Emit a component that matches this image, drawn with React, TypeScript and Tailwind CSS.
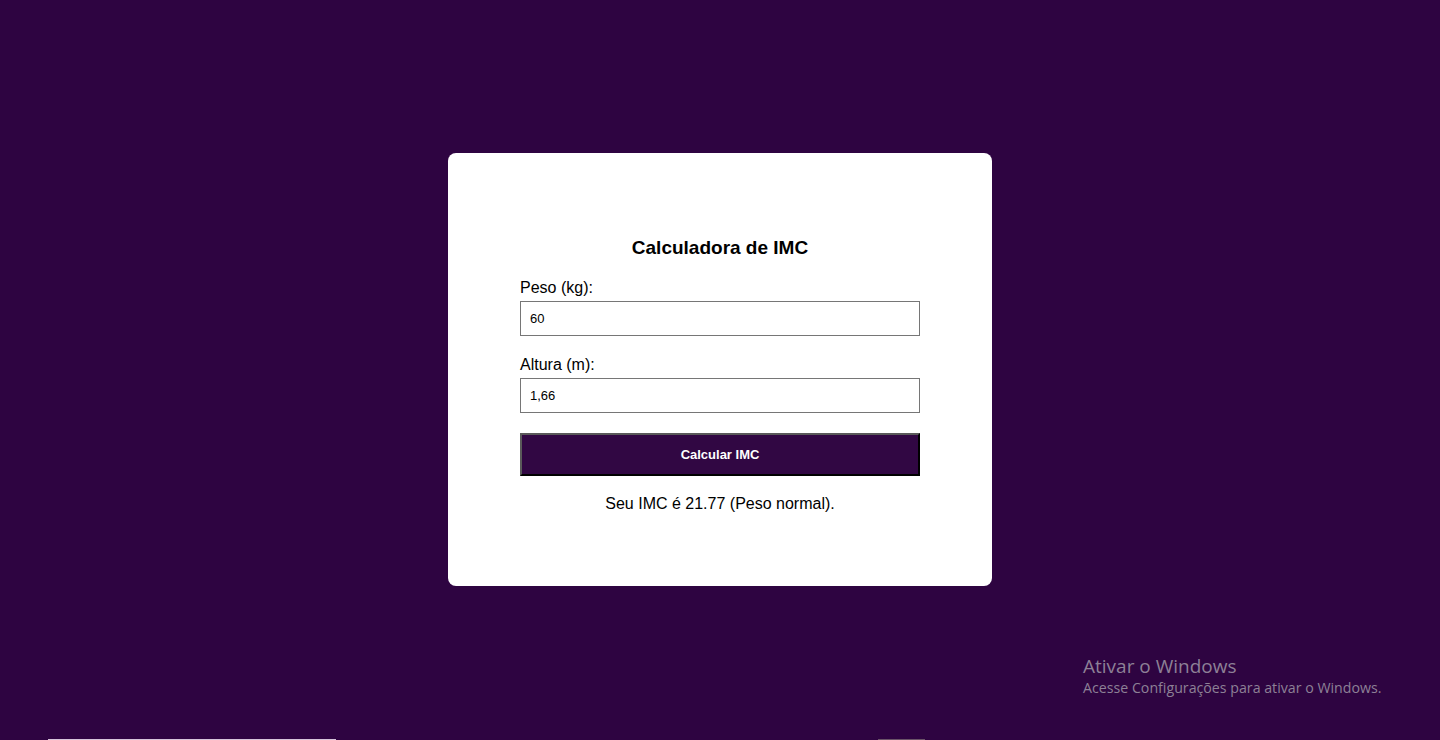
import { useState } from "react";

function classify(imc: number) {
  if (imc < 18.5) return "Abaixo do peso";
  if (imc < 25) return "Peso normal";
  if (imc < 30) return "Sobrepeso";
  return "Obesidade";
}

export default function App() {
  const [peso, setPeso] = useState("60");
  const [altura, setAltura] = useState("1,66");
  const [resultado, setResultado] = useState("Seu IMC é 21.77 (Peso normal).");

  function calcular() {
    const p = parseFloat(peso.replace(",", "."));
    const a = parseFloat(altura.replace(",", "."));
    if (!p || !a) {
      setResultado("Preencha os campos corretamente.");
      return;
    }
    const imc = p / (a * a);
    setResultado(`Seu IMC é ${imc.toFixed(2)} (${classify(imc)}).`);
  }

  return (
    <div className="relative h-[740px] w-full overflow-hidden bg-[#2e0441] font-['Liberation_Sans',Arial,sans-serif]">
      <div className="flex h-full items-start justify-center pt-[153px]">
        <div className="flex h-[433px] w-[544px] flex-col rounded-lg bg-white px-[72px] pt-[84px]">
          <h2 className="text-center text-[19px] leading-[22px] font-bold text-black">
            Calculadora de IMC
          </h2>

          <label className="mt-[20px] text-[16px] leading-[18px] text-black">Peso (kg):</label>
          <input
            value={peso}
            onChange={(e) => setPeso(e.target.value)}
            className="mt-1 h-[35px] w-full border border-[#767676] px-[9px] text-[13px] text-black outline-none"
          />

          <label className="mt-5 text-[16px] leading-[18px] text-black">Altura (m):</label>
          <input
            value={altura}
            onChange={(e) => setAltura(e.target.value)}
            className="mt-1 h-[35px] w-full border border-[#767676] px-[9px] text-[13px] text-black outline-none"
          />

          <button
            onClick={calcular}
            className="mt-5 h-[43px] w-full border-2 border-t-[#5a5a5a] border-l-[#5a5a5a] border-r-black border-b-black bg-[#310743] text-[13px] font-bold text-white"
          >
            Calcular IMC
          </button>

          <p className="mt-[19px] text-center text-[16px] leading-[18px] text-black">{resultado}</p>
        </div>
      </div>

      <div className="absolute top-[654px] left-[1083px] font-['Open_Sans','Noto_Sans',sans-serif] text-[#8d8096]">
        <div className="text-[19px] leading-[24px]">Ativar o Windows</div>
        <div className="text-[14.2px] leading-[20px]">Acesse Configurações para ativar o Windows.</div>
      </div>

      <div className="absolute bottom-0 left-[48px] h-px w-[288px] bg-[#d6c4da]" />
      <div className="absolute bottom-0 left-[878px] h-px w-[47px] bg-[#6a5468]" />
    </div>
  );
}
